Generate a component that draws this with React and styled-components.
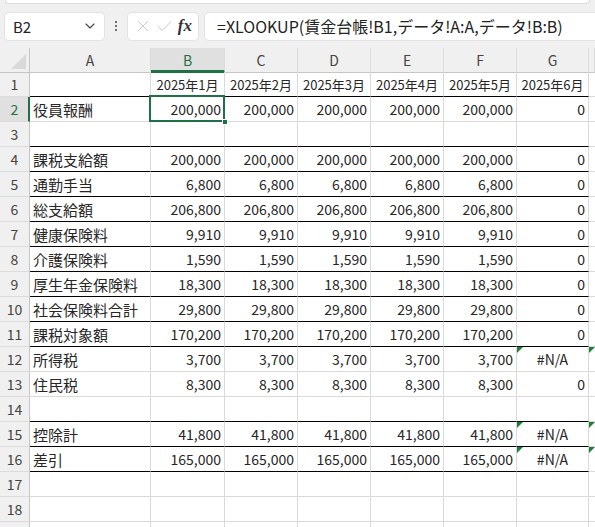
import React from "react";
import styled, { createGlobalStyle, css } from "styled-components";
import { ChevronDown, X, Check } from "lucide-react";

const GREEN = "#1e7145";
const GRID = "#dadada";
const TEMPLATE = "30px 121px 74px 73px 73px 73px 73px 72px 1fr";

const months = ["2025年1月", "2025年2月", "2025年3月", "2025年4月", "2025年5月", "2025年6月"];

// rule = black line under the row (columns A-G)
const rows = [
    { n: 2, label: "役員報酬", v: "200,000", g: "0" },
    { n: 3, rule: true },
    { n: 4, label: "課税支給額", v: "200,000", g: "0", rule: true },
    { n: 5, label: "通勤手当", v: "6,800", g: "0", rule: true },
    { n: 6, label: "総支給額", v: "206,800", g: "0", rule: true },
    { n: 7, label: "健康保険料", v: "9,910", g: "0", rule: true },
    { n: 8, label: "介護保険料", v: "1,590", g: "0", rule: true },
    { n: 9, label: "厚生年金保険料", v: "18,300", g: "0", rule: true },
    { n: 10, label: "社会保険料合計", v: "29,800", g: "0", rule: true },
    { n: 11, label: "課税対象額", v: "170,200", g: "0", rule: true },
    { n: 12, label: "所得税", v: "3,700", g: "#N/A" },
    { n: 13, label: "住民税", v: "8,300", g: "0" },
    { n: 14, rule: true },
    { n: 15, label: "控除計", v: "41,800", g: "#N/A", rule: true },
    { n: 16, label: "差引", v: "165,000", g: "#N/A", rule: true },
    { n: 17 },
    { n: 18 },
    { n: 19, hidden: true },
];

const GlobalStyle = createGlobalStyle`
    html, body {
        margin: 0;
        padding: 0;
        background: #ffffff;
        overflow: hidden;
    }
    body {
        font-family: "Noto Sans CJK JP", "Noto Sans", sans-serif;
        color: #222;
    }
`;

export default function App() {
    return (
        <>
            <GlobalStyle />
            <Page>
                <TopBar>
                    <TopStrip />
                    <FormulaRow>
                        <NameBox>
                            <span>B2</span>
                            <ChevronDown size={16} strokeWidth={1.6} color="#444" />
                        </NameBox>
                        <Dots>
                            <i /><i /><i />
                        </Dots>
                        <FxBox>
                            <X size={18} strokeWidth={1.1} color="#bdbdbd" />
                            <Check size={19} strokeWidth={1.1} color="#bdbdbd" />
                            <FxLabel>fx</FxLabel>
                        </FxBox>
                        <FormulaBox>=XLOOKUP(賃金台帳!B1,データ!A:A,データ!B:B)</FormulaBox>
                    </FormulaRow>
                </TopBar>

                <Sheet>
                    <HeaderRow>
                        <Corner />
                        {["A", "B", "C", "D", "E", "F", "G"].map((c) => (
                            <ColHead key={c} $active={c === "B"}>{c}</ColHead>
                        ))}
                        <ColHead />
                    </HeaderRow>

                    <Row>
                        <RowHead>1</RowHead>
                        <Cell $rule />
                        {months.map((m) => (
                            <Cell key={m} $rule $align="center" $size={13}>{m}</Cell>
                        ))}
                        <Cell $edge />
                    </Row>

                    {rows.map((r) => {
                        const isErr = r.g === "#N/A";
                        return (
                            <Row key={r.n}>
                                <RowHead $active={r.n === 2}>{r.hidden ? "" : r.n}</RowHead>
                                <Cell $rule={r.rule} $size={15}>{r.label}</Cell>
                                {[0, 1, 2, 3, 4].map((i) => (
                                    <Cell key={i} $rule={r.rule} $align="right" $selected={r.n === 2 && i === 0}>
                                        {r.v}
                                    </Cell>
                                ))}
                                <Cell $rule={r.rule} $align={isErr ? "center" : "right"} $flag={isErr}>
                                    {r.g}
                                </Cell>
                                <Cell $edge $flag={isErr} />
                            </Row>
                        );
                    })}
                </Sheet>
            </Page>
        </>
    );
}

const Page = styled.div`
    width: 595px;
    height: 527px;
    overflow: hidden;
    display: flex;
    flex-direction: column;
`;

const TopBar = styled.div`
    height: 48px;
    background: #f0f0f0;
    display: flex;
    flex-direction: column;
    flex-shrink: 0;
`;

const TopStrip = styled.div`
    height: 3px;
    margin: 0 5px;
    background: #ffffff;
    border: 1px solid #dcdcdc;
    border-top: none;
    border-radius: 0 0 5px 5px;
`;

const FormulaRow = styled.div`
    display: flex;
    align-items: center;
    margin-top: 7px;
    padding-left: 4px;
    height: 30px;
`;

const boxStyle = css`
    height: 29px;
    box-sizing: border-box;
    background: #ffffff;
    border: 1px solid #e3e3e3;
    border-radius: 5px;
    display: flex;
    align-items: center;
`;

const NameBox = styled.div`
    ${boxStyle};
    width: 101px;
    padding: 0 6px 0 8px;
    justify-content: space-between;
    font-size: 15px;
    color: #222;
`;

const Dots = styled.div`
    width: 22px;
    display: flex;
    flex-direction: column;
    align-items: center;
    gap: 2px;

    i {
        width: 2px;
        height: 2px;
        background: #444;
        border-radius: 1px;
    }
`;

const FxBox = styled.div`
    ${boxStyle};
    width: 72px;
    padding: 0 4px 0 6px;
    justify-content: space-between;
`;

const FxLabel = styled.span`
    font-family: "Liberation Serif", "DejaVu Serif", serif;
    font-style: italic;
    font-weight: bold;
    font-size: 17px;
    color: #333;
    padding-right: 2px;
`;

const FormulaBox = styled.div`
    ${boxStyle};
    flex: 1;
    margin-left: 5px;
    border-right: none;
    border-radius: 5px 0 0 5px;
    padding-left: 12px;
    font-size: 16px;
    color: #222;
    white-space: nowrap;
`;

const Sheet = styled.div`
    display: flex;
    flex-direction: column;
`;

const rowGrid = css`
    display: grid;
    grid-template-columns: ${TEMPLATE};
`;

const HeaderRow = styled.div`
    ${rowGrid};
    height: 24px;
`;

const Row = styled.div`
    ${rowGrid};
    height: 25px;
`;

const Corner = styled.div`
    position: relative;
    background: #f0f0f0;
    border-right: 1px solid #c6c6c6;
    border-bottom: 1px solid #c6c6c6;

    &::after {
        content: "";
        position: absolute;
        right: 3px;
        bottom: 3px;
        width: 0;
        height: 0;
        border-left: 15px solid transparent;
        border-bottom: 15px solid #d9d9d9;
    }
`;

const ColHead = styled.div`
    box-sizing: border-box;
    background: ${(p) => (p.$active ? "#e0e0e0" : "#f0f0f0")};
    border-right: 1px solid #dcdcdc;
    border-bottom: ${(p) => (p.$active ? `3px solid ${GREEN}` : "1px solid #c6c6c6")};
    color: ${(p) => (p.$active ? GREEN : "#444")};
    font-size: 14px;
    display: flex;
    align-items: center;
    justify-content: center;
    padding-top: ${(p) => (p.$active ? "2px" : "0")};
`;

const RowHead = styled.div`
    box-sizing: border-box;
    background: ${(p) => (p.$active ? "#e0e0e0" : "#f0f0f0")};
    border-right: ${(p) => (p.$active ? `2px solid ${GREEN}` : "1px solid #c6c6c6")};
    border-bottom: 1px solid #dcdcdc;
    color: ${(p) => (p.$active ? GREEN : "#444")};
    font-size: 14px;
    display: flex;
    align-items: center;
    justify-content: center;
    padding-left: ${(p) => (p.$active ? "1px" : "0")};
`;

const Cell = styled.div`
    position: relative;
    box-sizing: border-box;
    min-width: 0;
    border-right: 1px solid ${GRID};
    border-bottom: 1px solid ${(p) => (p.$rule ? "#000" : GRID)};
    display: flex;
    align-items: center;
    justify-content: ${(p) =>
        p.$align === "right" ? "flex-end" : p.$align === "center" ? "center" : "flex-start"};
    padding: 0 3px;
    font-size: ${(p) => p.$size || 14}px;
    color: #262626;
    white-space: nowrap;
    overflow: visible;

    ${(p) =>
        p.$edge &&
        css`
            border-right: none;
        `}

    ${(p) =>
        p.$flag &&
        css`
            &::before {
                content: "";
                position: absolute;
                left: 0;
                top: 0;
                width: 0;
                height: 0;
                border-top: 6px solid #1a7f37;
                border-right: 6px solid transparent;
            }
        `}

    ${(p) =>
        p.$selected &&
        css`
            &::after {
                content: "";
                position: absolute;
                left: -2px;
                top: -2px;
                right: -1px;
                bottom: -1px;
                border: 2px solid ${GREEN};
                pointer-events: none;
            }
            &::before {
                content: "";
                position: absolute;
                right: -4px;
                bottom: -4px;
                width: 6px;
                height: 6px;
                background: ${GREEN};
                border: 1px solid #fff;
                box-sizing: border-box;
                z-index: 1;
            }
        `}
`;
